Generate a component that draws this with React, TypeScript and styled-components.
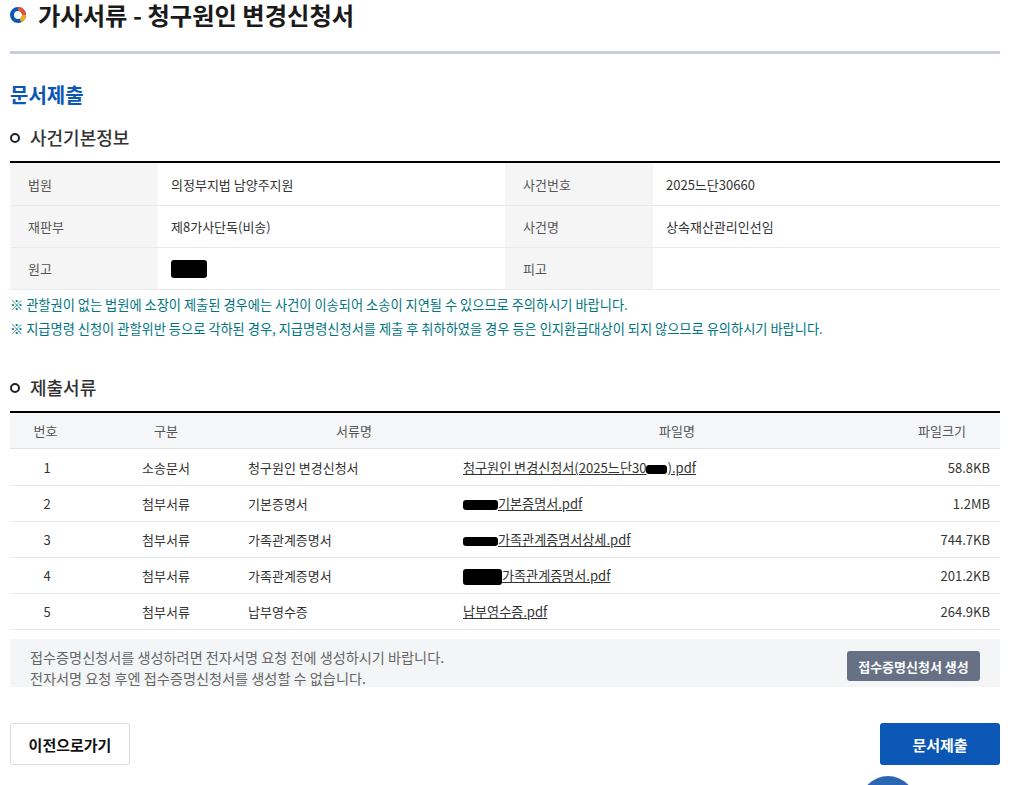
import React from 'react'
import styled, { createGlobalStyle } from 'styled-components'

const GlobalStyle = createGlobalStyle`
  html, body {
    margin: 0;
    padding: 0;
    background: #fff;
    overflow: hidden;
  }
  body {
    font-family: 'Noto Sans CJK KR', 'Noto Sans', sans-serif;
    color: #333;
  }
  * {
    box-sizing: border-box;
  }
`

const COLORS = {
  blue: '#0b57b5',
  line: '#e8eaed',
  teal: '#00757f',
  head: '#f5f5f5',
}

const caseRows = [
  { label: '법원', value: '의정부지법 남양주지원', label2: '사건번호', value2: '2025느단30660' },
  { label: '재판부', value: '제8가사단독(비송)', label2: '사건명', value2: '상속재산관리인선임' },
  { label: '원고', value: '', label2: '피고', value2: '' },
]

const App = () => {
  const files = [
    { no: 1, kind: '소송문서', name: '청구원인 변경신청서', file: <>청구원인 변경신청서(2025느단30<Redact $width={21} $height={9} />).pdf</>, size: '58.8KB' },
    { no: 2, kind: '첨부서류', name: '기본증명서', file: <><Redact $width={35} $height={10} />기본증명서.pdf</>, size: '1.2MB' },
    { no: 3, kind: '첨부서류', name: '가족관계증명서', file: <><Redact $width={35} $height={9} />가족관계증명서상세.pdf</>, size: '744.7KB' },
    { no: 4, kind: '첨부서류', name: '가족관계증명서', file: <><Redact $width={39} $height={16} />가족관계증명서.pdf</>, size: '201.2KB' },
    { no: 5, kind: '첨부서류', name: '납부영수증', file: <>납부영수증.pdf</>, size: '264.9KB' },
  ]

  return (
    <>
      <GlobalStyle />
      <Page>
        <PageHeader>
          <TitleIcon viewBox="0 0 16 16">
            <circle cx="8" cy="8" r="6" fill="none" stroke="#0b57b5" strokeWidth="4" />
            <path d="M8 2 A6 6 0 0 1 14 8" fill="none" stroke="#e2553c" strokeWidth="4" />
            <path d="M14 8 A6 6 0 0 1 10.5 13.5" fill="none" stroke="#f2a81d" strokeWidth="4" />
          </TitleIcon>
          <PageTitle>가사서류 - 청구원인 변경신청서</PageTitle>
        </PageHeader>

        <Heading>문서제출</Heading>

        <SectionTitle $top={17}>사건기본정보</SectionTitle>
        <InfoTable>
          {caseRows.map((row) => (
            <InfoRow key={row.label}>
              <InfoLabel>{row.label}</InfoLabel>
              <InfoValue>{row.value || <Redact $width={36} $height={18} />}</InfoValue>
              <InfoLabel>{row.label2}</InfoLabel>
              <InfoValue>{row.value2}</InfoValue>
            </InfoRow>
          ))}
        </InfoTable>
        <Notes>
          <li>※ 관할권이 없는 법원에 소장이 제출된 경우에는 사건이 이송되어 소송이 지연될 수 있으므로 주의하시기 바랍니다.</li>
          <li>※ 지급명령 신청이 관할위반 등으로 각하된 경우, 지급명령신청서를 제출 후 취하하였을 경우 등은 인지환급대상이 되지 않으므로 유의하시기 바랍니다.</li>
        </Notes>

        <SectionTitle $top={35}>제출서류</SectionTitle>
        <FileTable>
          <FileHead>
            <span>번호</span>
            <span>구분</span>
            <span>서류명</span>
            <span>파일명</span>
            <span>파일크기</span>
          </FileHead>
          {files.map((item) => (
            <FileRow key={item.no}>
              <Center>{item.no}</Center>
              <Center>{item.kind}</Center>
              <span>{item.name}</span>
              <FileLink>{item.file}</FileLink>
              <Size>{item.size}</Size>
            </FileRow>
          ))}
        </FileTable>

        <NoticeBox>
          <NoticeText>
            접수증명신청서를 생성하려면 전자서명 요청 전에 생성하시기 바랍니다.
            <br />
            전자서명 요청 후엔 접수증명신청서를 생성할 수 없습니다.
          </NoticeText>
          <GrayButton>접수증명신청서 생성</GrayButton>
        </NoticeBox>

        <Actions>
          <BackButton>이전으로가기</BackButton>
          <SubmitButton>문서제출</SubmitButton>
        </Actions>

        <FloatingCircle />
      </Page>
    </>
  )
}

export default App

const Page = styled.div`
  position: relative;
  width: 1011px;
  height: 785px;
  padding: 0 11px 0 10px;
  overflow: hidden;
`

const PageHeader = styled.header`
  display: flex;
  align-items: center;
  gap: 12px;
  height: 54px;
  padding: 2px 0 23px;
  border-bottom: 3px solid #c9cfda;
`

const TitleIcon = styled.svg`
  width: 16px;
  height: 16px;
  flex: none;
`

const PageTitle = styled.h1`
  margin: 0;
  font-size: 24.3px;
  line-height: 26px;
  font-weight: 700;
  color: #1a1a1a;
`

const Heading = styled.h2`
  margin: 27px 0 0;
  font-size: 20px;
  line-height: 28px;
  font-weight: 700;
  color: ${COLORS.blue};
`

const SectionTitle = styled.h3<{ $top: number }>`
  display: flex;
  align-items: center;
  gap: 10px;
  margin: ${({ $top }) => $top}px 0 0;
  height: 35px;
  padding-bottom: 12px;
  font-size: 18px;
  line-height: 23px;
  font-weight: 500;
  color: #333;

  &::before {
    content: '';
    box-sizing: border-box;
    width: 10px;
    height: 10px;
    border: 2.5px solid #222;
    border-radius: 50%;
  }
`

const InfoTable = styled.div`
  border-top: 2px solid #000;
`

const InfoRow = styled.div`
  display: grid;
  grid-template-columns: 148px 347px 148px 1fr;
  height: 42px;
  border-bottom: 1px solid ${COLORS.line};
  font-size: 13px;

  &:first-child {
    height: 43px;
  }
`

const InfoLabel = styled.div`
  display: flex;
  align-items: center;
  padding-left: 18px;
  background: ${COLORS.head};
  color: #555;
`

const InfoValue = styled.div`
  display: flex;
  align-items: center;
  padding-left: 13px;
  color: #333;
`

const Notes = styled.ul`
  margin: 3px 0 0;
  padding: 0;
  list-style: none;
  font-size: 13.23px;
  line-height: 24px;
  font-weight: 400;
  color: ${COLORS.teal};
`

const FileTable = styled.div`
  border-top: 2px solid #000;
`

const FileHead = styled.div`
  display: grid;
  grid-template-columns: 71px 170px 206px 440px 90px;
  align-items: center;
  height: 36px;
  background: #f5f6f8;
  border-bottom: 1px solid #dfe1e5;
  font-size: 13px;
  color: #555;
  text-align: center;
`

const FileRow = styled.div`
  display: grid;
  grid-template-columns: 74px 164px 215px 1fr 112px;
  align-items: center;
  height: 36px;
  border-bottom: 1px solid ${COLORS.line};
  font-size: 13px;
  color: #333;

  &:nth-child(2) {
    height: 37px;
    padding-top: 1px;
  }
`

const Center = styled.span`
  text-align: center;
`

const FileLink = styled.span`
  font-size: 13.1px;
  text-decoration: underline;
  white-space: nowrap;
`

const Size = styled.span`
  padding-right: 10px;
  text-align: right;
`

const Redact = styled.span<{ $width: number; $height: number }>`
  display: inline-block;
  width: ${({ $width }) => $width}px;
  height: ${({ $height }) => $height}px;
  background: #000;
  border-radius: 3px;
  vertical-align: middle;
`

const NoticeBox = styled.div`
  display: flex;
  align-items: center;
  justify-content: space-between;
  height: 48px;
  margin-top: 9px;
  padding: 0 20px;
  background: #f3f5f7;
`

const NoticeText = styled.p`
  margin: 10px 0 0;
  font-size: 14.18px;
  line-height: 21px;
  color: #666;
`

const GrayButton = styled.button`
  width: 133px;
  height: 30px;
  margin-top: 6px;
  padding: 0;
  border: 0;
  border-radius: 3px;
  background: #667186;
  color: #fff;
  font-family: inherit;
  font-size: 13px;
  font-weight: 700;
`

const Actions = styled.div`
  display: flex;
  justify-content: space-between;
  margin-top: 36px;
`

const BackButton = styled.button`
  width: 120px;
  height: 42px;
  border: 1px solid #d9dce1;
  border-radius: 3px;
  background: #fff;
  color: #111;
  font-family: inherit;
  font-size: 15px;
  font-weight: 700;
`

const SubmitButton = styled.button`
  width: 120px;
  height: 42px;
  border: 0;
  border-radius: 3px;
  background: ${COLORS.blue};
  color: #fff;
  font-family: inherit;
  font-size: 15px;
  font-weight: 700;
`

const FloatingCircle = styled.div`
  position: absolute;
  left: 860px;
  top: 776px;
  width: 56px;
  height: 56px;
  border-radius: 50%;
  background: #2b66b5;
`
